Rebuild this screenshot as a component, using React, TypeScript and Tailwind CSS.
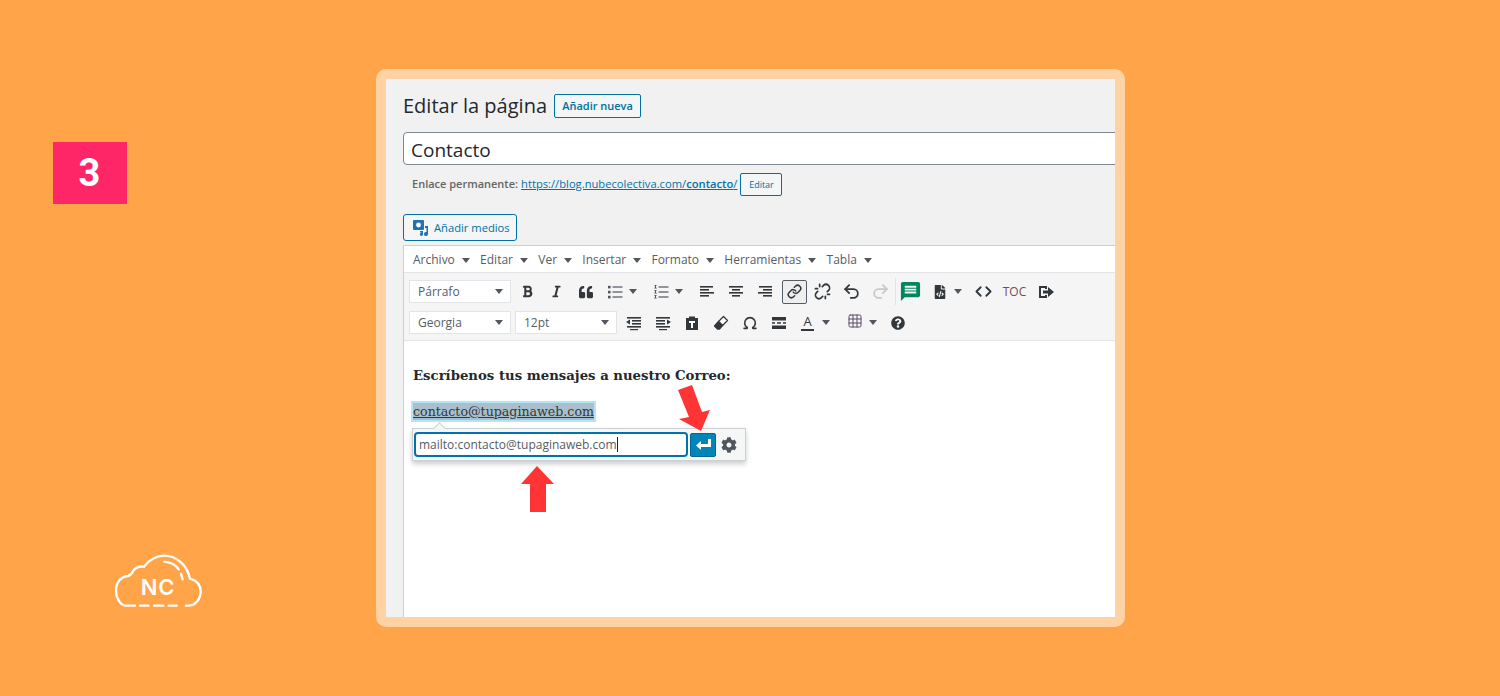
import React from 'react';
import { Code, Grid3x3, Link, Omega, Redo2, Undo2, Unlink } from 'lucide-react';
import { FaBold, FaCog, FaFileCode, FaItalic, FaQuestionCircle, FaQuoteLeft } from 'react-icons/fa';
import { MdMessage } from 'react-icons/md';

const Caret = () => (
    <span className="inline-block w-0 h-0 border-x-[4px] border-x-transparent border-t-[5px] border-t-[#50575e]" />
);

const Lines = ({ rows }: { rows: [number, number][] }) => (
    <svg width="16" height="16" viewBox="0 0 16 16" fill="#32373c">
        {rows.map(([x, w], i) => (
            <rect key={i} x={x} y={2 + i * 3} width={w} height="1.6" />
        ))}
    </svg>
);

const ListIcon = ({ numbered }: { numbered?: boolean }) => (
    <svg width="16" height="16" viewBox="0 0 16 16" fill="#50575e">
        {[3, 8, 13].map(y => (
            <g key={y}>
                {numbered ? (
                    <path d={`M1.5 ${y - 2}h2v1h-2zM2 ${y - 1}h1v2H2zM1.2 ${y + 0.8}h2.6v0.8H1.2z`} />
                ) : (
                    <rect x="1" y={y - 1.2} width="2.6" height="2.6" />
                )}
                <rect x="5.5" y={y - 0.6} width="10" height="1.2" />
            </g>
        ))}
    </svg>
);

const IndentIcon = ({ out }: { out?: boolean }) => (
    <svg width="16" height="16" viewBox="0 0 16 16" fill="#32373c">
        <rect x="1" y="2" width="14" height="1.6" />
        <rect x={out ? 6 : 1} y="5" width="9" height="1.6" />
        <rect x={out ? 6 : 1} y="8" width="9" height="1.6" />
        <rect x="1" y="11" width="14" height="1.6" />
        <polygon points={out ? '0,7 4,4.5 4,9.5' : '16,7 12,4.5 12,9.5'} />
        <rect x="4" y="14" width="8" height="1.2" />
    </svg>
);

const PasteIcon = () => (
    <svg width="16" height="16" viewBox="0 0 16 16">
        <path d="M2 3h3V1.5h6V3h3v12H2z" fill="#32373c" />
        <path d="M5 6h6v2H9v5H7V8H5z" fill="#fff" />
    </svg>
);

const HrIcon = () => (
    <svg width="16" height="16" viewBox="0 0 16 16" fill="#32373c">
        <rect x="1" y="2" width="14" height="3.5" />
        <rect x="1" y="7.2" width="3" height="1.5" />
        <rect x="6" y="7.2" width="4" height="1.5" />
        <rect x="12" y="7.2" width="3" height="1.5" />
        <rect x="1" y="10.5" width="14" height="3.5" />
    </svg>
);

const EraserIcon = () => (
    <svg width="16" height="16" viewBox="0 0 16 16">
        <path d="M10.5 1.5l4 4-5 5-4-4z" fill="#fff" stroke="#32373c" strokeWidth="1.3" strokeLinejoin="round" />
        <path d="M5.5 6.5l4 4-3 3.5H4.5L1.5 11z" fill="#32373c" stroke="#32373c" strokeWidth="1.3" strokeLinejoin="round" />
    </svg>
);

const ExitIcon = () => (
    <svg width="17" height="16" viewBox="0 0 17 16" fill="#32373c">
        <path d="M1 2h8v3H7V4H3v8h4v-1h2v3H1z" />
        <path d="M5 6.5h5V3l6 5-6 5V9.5H5z" />
    </svg>
);

const MediaIcon = () => (
    <svg width="17" height="17" viewBox="0 0 17 17" fill="#2271b1">
        <path d="M2 1h9a1 1 0 0 1 1 1v8a1 1 0 0 1-1 1H2a1 1 0 0 1-1-1V2a1 1 0 0 1 1-1z" />
        <circle cx="6.5" cy="6" r="2.4" fill="#fff" />
        <path d="M13 7h3v8a2 2 0 1 1-1.5-1.9V9H13z" />
        <path d="M8 12h3v3.2a1.6 1.6 0 1 1-1.4-1.5V13.5H8z" />
    </svg>
);

const CloudLogo = () => (
    <svg width="120" height="80" viewBox="0 0 360 240" fill="none" stroke="#fff" strokeWidth="7" strokeLinecap="round">
        <path d="M105 197H78C60 197 48 172 48 152C48 128 62 110 84 108C92 106 96 100 100 92C108 82 120 78 132 80C148 60 168 47 192 47C232 47 262 78 270 116C290 122 302 136 302 154C302 176 288 197 264 197H258" />
        <path d="M120 197H145M162 197H190M206 197H230" />
        <path d="M193 65C212 67 228 76 236 88M243 101L248 118" />
        <text x="122" y="166" fill="#fff" stroke="none" fontFamily="Inter, sans-serif" fontWeight="600" fontSize="66" letterSpacing="3">NC</text>
    </svg>
);

const menus = ['Archivo', 'Editar', 'Ver', 'Insertar', 'Formato', 'Herramientas', 'Tabla'];

const Btn = ({ w = 'w-[29px]', children }: { w?: string; children: React.ReactNode }) => (
    <div className={`${w} h-[23px] shrink-0 flex items-center justify-center text-[#32373c]`}>{children}</div>
);

const Split = ({ w, children }: { w: string; children: React.ReactNode }) => (
    <div className={`${w} h-[23px] shrink-0 flex items-center text-[#32373c]`}>
        <div className="w-[29px] flex justify-center shrink-0">{children}</div>
        <Caret />
    </div>
);

const SelectBox = ({ label, w }: { label: string; w: string }) => (
    <div className={`${w} h-[23px] bg-white border border-[#e2e4e7] flex items-center justify-between pl-2 pr-[7px] text-[12px] text-[#555d66] shrink-0`}>
        {label}
        <Caret />
    </div>
);

export default function App() {
    return (
        <div className="w-[1500px] h-[696px] bg-[#ffa448] flex overflow-hidden font-['Open_Sans',sans-serif]">
            <div className="w-[376px] shrink-0 flex flex-col">
                <div className="ml-[53px] mt-[142px] w-[74px] h-[62px] bg-[#ff2667] flex items-center justify-center pr-[1px] text-white text-[38px] font-bold font-['Roboto',sans-serif] leading-none">
                    3
                </div>
                <div className="ml-[100px] mt-[336px]">
                    <CloudLogo />
                </div>
            </div>

            <div className="mt-[69px] w-[749px] h-[558px] border-[10px] border-[#ffd2a3] rounded-[10px] bg-[#f1f1f1] overflow-hidden">
                <div className="pl-[17px] w-[729px] overflow-hidden">
                    <div className="flex items-center h-[26px] mt-[15px]">
                        <h1 className="text-[20px] leading-none text-[#23282d] -mt-[2px]">Editar la página</h1>
                        <div className="ml-[7px] mb-[2px] w-[87px] h-[24px] border border-[#0071a1] rounded-[2px] bg-[#f3f5f6] text-[#0071a1] text-[11px] font-semibold flex items-center justify-center">
                            Añadir nueva
                        </div>
                    </div>

                    <div className="mt-[12px] w-[800px] h-[33px] bg-white border border-[#7e8993] rounded-[4px] flex items-center pl-[7px] pt-[3px] text-[19px] text-[#23282d]">
                        Contacto
                    </div>

                    <div className="mt-[8px] h-[23px] flex items-center pl-[9px] text-[11px] text-[#666] whitespace-nowrap">
                        <span className="font-semibold">Enlace permanente:</span>
                        <span className="ml-[3px] text-[11.2px] text-[#0073aa] underline">
                            https://blog.nubecolectiva.com/<b className="font-semibold">contacto</b>/
                        </span>
                        <div className="ml-[3px] w-[42px] h-[23px] shrink-0 border border-[#0071a1] rounded-[2px] bg-[#f3f5f6] text-[#0071a1] text-[9px] flex items-center justify-center">
                            Editar
                        </div>
                    </div>

                    <div className="mt-[18px] w-[114px] h-[27px] border border-[#0071a1] rounded-[3px] bg-[#f3f5f6] text-[#0071a1] text-[11.2px] flex items-center pl-[8px] gap-[5px]">
                        <MediaIcon />
                        <span className="pt-[2px]">Añadir medios</span>
                    </div>

                    <div className="mt-[4px] w-[800px] h-[380px] border border-[#ccd0d4] bg-white relative">
                        <div className="h-[27px] flex items-center pl-[9px] pt-[2px] gap-[10.25px] border-b border-[#e2e4e7] text-[12px] text-[#555d66]">
                            {menus.map(m => (
                                <div key={m} className="flex items-center gap-[7px]">
                                    {m}
                                    <Caret />
                                </div>
                            ))}
                        </div>

                        <div className="h-[68px] bg-[#f5f5f5] border-b border-[#e2e4e7] pl-[5px] pt-[7px] flex flex-col gap-[8px]">
                            <div className="flex items-center">
                                <SelectBox label="Párrafo" w="w-[102px]" />
                                <div className="w-[2px]" />
                                <Btn><FaBold size={13} /></Btn>
                                <Btn><FaItalic size={13} /></Btn>
                                <Btn><FaQuoteLeft size={14} /></Btn>
                                <Split w="w-[46px]"><ListIcon /></Split>
                                <Split w="w-[46px]"><ListIcon numbered /></Split>
                                <Btn><Lines rows={[[1, 13], [1, 9], [1, 14], [1, 9]]} /></Btn>
                                <Btn><Lines rows={[[1, 14], [4, 8], [1, 14], [4, 8]]} /></Btn>
                                <Btn><Lines rows={[[2, 13], [6, 9], [1, 14], [6, 9]]} /></Btn>
                                <Btn>
                                    <div className="ml-[2px] w-[25px] h-[24px] border border-[#555d66] rounded-[2px] bg-[#eeeeee] flex items-center justify-center">
                                        <Link size={15} strokeWidth={2.4} />
                                    </div>
                                </Btn>
                                <Btn><Unlink size={17} strokeWidth={2.4} /></Btn>
                                <Btn><Undo2 size={19} strokeWidth={2.2} /></Btn>
                                <Btn><Redo2 size={19} strokeWidth={2.2} className="text-[#c5c8cb]" /></Btn>
                                <div className="w-[1px] h-[27px] -my-[2px] bg-[#e2e4e7]" />
                                <Btn><MdMessage size={23} className="text-[#00875f]" /></Btn>
                                <Split w="w-[44px]"><FaFileCode size={14} /></Split>
                                <Btn><Code size={17} strokeWidth={2.6} /></Btn>
                                <Btn w="w-[33px]"><span className="text-[12px] text-[#7a4a55]">TOC</span></Btn>
                                <Btn w="w-[30px]"><ExitIcon /></Btn>
                            </div>
                            <div className="flex items-center">
                                <SelectBox label="Georgia" w="w-[102px]" />
                                <div className="w-[4px]" />
                                <SelectBox label="12pt" w="w-[102px]" />
                                <div className="w-[2px]" />
                                <Btn><IndentIcon out /></Btn>
                                <Btn><IndentIcon /></Btn>
                                <Btn><PasteIcon /></Btn>
                                <Btn><EraserIcon /></Btn>
                                <Btn><Omega size={16} strokeWidth={2.4} /></Btn>
                                <Btn><HrIcon /></Btn>
                                <Split w="w-[47px]">
                                    <span className="text-[13px] leading-[15px] border-b-2 border-[#32373c] px-[2px]">A</span>
                                </Split>
                                <Split w="w-[43px]"><Grid3x3 size={16} strokeWidth={1.5} className="text-[#5b4a6b] -translate-y-[2px]" /></Split>
                                <Btn><FaQuestionCircle size={14} /></Btn>
                            </div>
                        </div>

                        <div className="pl-[9px] font-['DejaVu_Serif',serif] text-[#23282d]">
                            <p className="mt-[26px] text-[13.25px] font-bold leading-[17px]">Escríbenos tus mensajes a nuestro Correo:</p>
                            <p className="mt-[18px] leading-[17px]">
                                <span className="inline-block bg-[#a9bfcc] outline-2 outline-[#b4e4fa] text-[12.6px] underline text-[#32373c]">contacto@tupaginaweb.com</span>
                            </p>
                        </div>

                        <div className="absolute left-[8px] top-[182px] w-[334px] h-[33px] bg-[#f5f6f6] border border-[#ccd0d4] shadow-[0_3px_5px_rgba(0,0,0,0.2)] flex items-center pl-[1px]">
                            <div className="absolute left-[22px] -top-[5px] w-[9px] h-[9px] bg-[#f5f6f6] rotate-45 border-l border-t border-[#ccd0d4]" />
                            <div className="w-[274px] h-[25px] bg-white border-2 border-[#0073aa] rounded-[4px] flex items-center pl-[3px] text-[12px] text-[#555d66] whitespace-nowrap relative">
                                mailto:contacto@tupaginaweb.com
                                <span className="w-[1px] h-[15px] bg-[#222]" />
                            </div>
                            <div className="ml-[2px] w-[26px] h-[24px] bg-[#0085ba] border border-[#006799] rounded-[2px] flex items-center justify-center">
                                <svg width="17" height="13" viewBox="0 0 17 13" fill="#fff">
                                    <path d="M13 1h3v8H6v3L1 7.5 6 3v3h7z" />
                                </svg>
                            </div>
                            <div className="w-[26px] flex justify-center text-[#50575e]">
                                <FaCog size={16} />
                            </div>
                        </div>

                        <svg className="absolute left-[113px] top-[215px]" width="40" height="52" viewBox="0 0 40 52" fill="#ff3535">
                            <polygon points="23,5 40,23 32,23 32,51 16,51 16,23 7,23" transform="translate(-3 0)" />
                        </svg>
                        <svg className="absolute left-[270px] top-[136px]" width="40" height="52" viewBox="0 0 40 52" fill="#ff3535">
                            <polygon points="4,8 18,3 28,30 36,28 27,49 5,37 15,35" />
                        </svg>
                    </div>
                </div>
            </div>
        </div>
    );
}
